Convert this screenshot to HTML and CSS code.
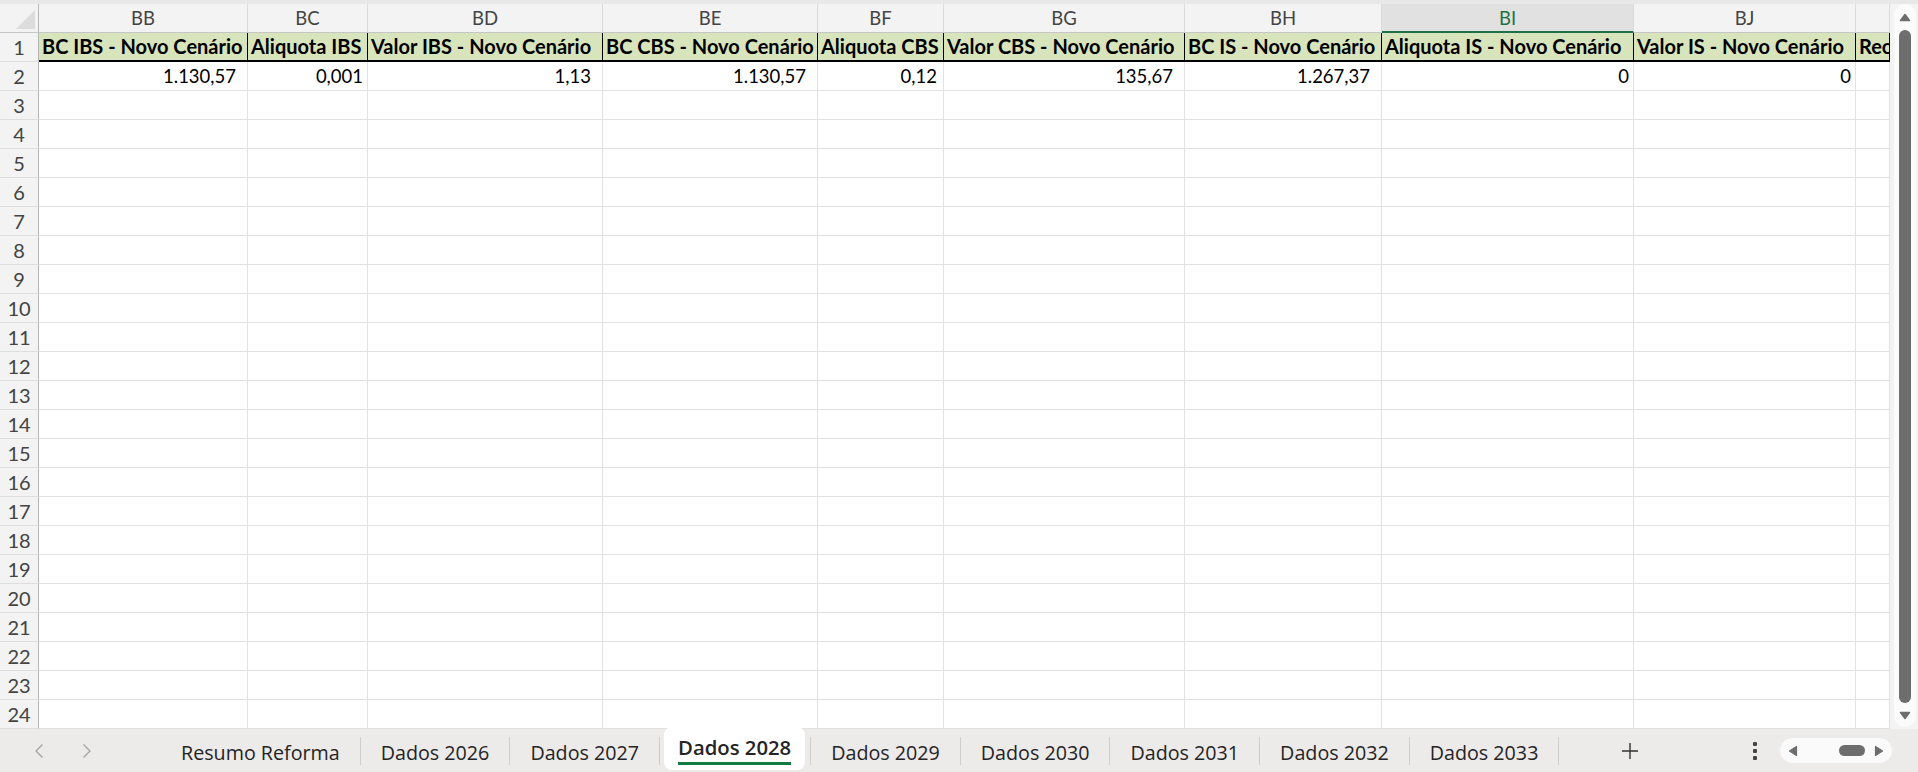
FILE: index.html
```html
<!DOCTYPE html>
<html lang="pt">
<head>
<meta charset="utf-8">
<title>Dados 2028</title>
<link rel="stylesheet" href="styles.css">
</head>
<body>
<div class="app">
  <div class="topstrip"></div>
  <div class="main">
    <div class="sheet">
      <div class="ch corner"><span class="tri"></span></div><div class="ch">BB</div><div class="ch">BC</div><div class="ch">BD</div><div class="ch">BE</div><div class="ch">BF</div><div class="ch">BG</div><div class="ch">BH</div><div class="ch sel">BI</div><div class="ch">BJ</div><div class="ch"></div>
      <div class="rh">1</div><div class="h">BC IBS - Novo Cenário</div><div class="h">Aliquota IBS</div><div class="h">Valor IBS - Novo Cenário</div><div class="h">BC CBS - Novo Cenário</div><div class="h">Aliquota CBS</div><div class="h">Valor CBS - Novo Cenário</div><div class="h">BC IS - Novo Cenário</div><div class="h">Aliquota IS - Novo Cenário</div><div class="h">Valor IS - Novo Cenário</div><div class="h">Receita</div>
      <div class="rh">2</div><div class="n acc">1.130,57</div><div class="n">0,001</div><div class="n acc">1,13</div><div class="n acc">1.130,57</div><div class="n mid">0,12</div><div class="n acc">135,67</div><div class="n acc">1.267,37</div><div class="n">0</div><div class="n">0</div><div></div>
      <div class="rh">3</div><div></div><div></div><div></div><div></div><div></div><div></div><div></div><div></div><div></div><div></div>
      <div class="rh">4</div><div></div><div></div><div></div><div></div><div></div><div></div><div></div><div></div><div></div><div></div>
      <div class="rh">5</div><div></div><div></div><div></div><div></div><div></div><div></div><div></div><div></div><div></div><div></div>
      <div class="rh">6</div><div></div><div></div><div></div><div></div><div></div><div></div><div></div><div></div><div></div><div></div>
      <div class="rh">7</div><div></div><div></div><div></div><div></div><div></div><div></div><div></div><div></div><div></div><div></div>
      <div class="rh">8</div><div></div><div></div><div></div><div></div><div></div><div></div><div></div><div></div><div></div><div></div>
      <div class="rh">9</div><div></div><div></div><div></div><div></div><div></div><div></div><div></div><div></div><div></div><div></div>
      <div class="rh">10</div><div></div><div></div><div></div><div></div><div></div><div></div><div></div><div></div><div></div><div></div>
      <div class="rh">11</div><div></div><div></div><div></div><div></div><div></div><div></div><div></div><div></div><div></div><div></div>
      <div class="rh">12</div><div></div><div></div><div></div><div></div><div></div><div></div><div></div><div></div><div></div><div></div>
      <div class="rh">13</div><div></div><div></div><div></div><div></div><div></div><div></div><div></div><div></div><div></div><div></div>
      <div class="rh">14</div><div></div><div></div><div></div><div></div><div></div><div></div><div></div><div></div><div></div><div></div>
      <div class="rh">15</div><div></div><div></div><div></div><div></div><div></div><div></div><div></div><div></div><div></div><div></div>
      <div class="rh">16</div><div></div><div></div><div></div><div></div><div></div><div></div><div></div><div></div><div></div><div></div>
      <div class="rh">17</div><div></div><div></div><div></div><div></div><div></div><div></div><div></div><div></div><div></div><div></div>
      <div class="rh">18</div><div></div><div></div><div></div><div></div><div></div><div></div><div></div><div></div><div></div><div></div>
      <div class="rh">19</div><div></div><div></div><div></div><div></div><div></div><div></div><div></div><div></div><div></div><div></div>
      <div class="rh">20</div><div></div><div></div><div></div><div></div><div></div><div></div><div></div><div></div><div></div><div></div>
      <div class="rh">21</div><div></div><div></div><div></div><div></div><div></div><div></div><div></div><div></div><div></div><div></div>
      <div class="rh">22</div><div></div><div></div><div></div><div></div><div></div><div></div><div></div><div></div><div></div><div></div>
      <div class="rh">23</div><div></div><div></div><div></div><div></div><div></div><div></div><div></div><div></div><div></div><div></div>
      <div class="rh">24</div><div></div><div></div><div></div><div></div><div></div><div></div><div></div><div></div><div></div><div></div>
    </div>
    <div class="vscroll">
      <div class="vtrack">
        <svg class="varrow" viewBox="0 0 12 9"><path d="M6 1.5 10.5 7.5H1.5Z"/></svg>
        <div class="vthumb"></div>
        <svg class="varrow" viewBox="0 0 12 9"><path d="M6 7.5 10.5 1.5H1.5Z"/></svg>
      </div>
    </div>
  </div>
  <div class="tabbar">
    <div class="nav">
      <svg class="chev" viewBox="0 0 8 14"><path d="M7 1 1 7l6 6"/></svg>
      <svg class="chev" viewBox="0 0 8 14"><path d="M1 1l6 6-6 6"/></svg>
    </div>
    <div class="tabs">
      <div class="tab">Resumo Reforma</div>
      <span class="sep"></span>
      <div class="tab">Dados 2026</div>
      <span class="sep"></span>
      <div class="tab">Dados 2027</div>
      <span class="sep"></span>
      <div class="tab active"><span class="lbl">Dados 2028</span></div>
      <span class="sep"></span>
      <div class="tab">Dados 2029</div>
      <span class="sep"></span>
      <div class="tab">Dados 2030</div>
      <span class="sep"></span>
      <div class="tab">Dados 2031</div>
      <span class="sep"></span>
      <div class="tab">Dados 2032</div>
      <span class="sep"></span>
      <div class="tab">Dados 2033</div>
      <span class="sep"></span>
    </div>
    <div class="add">
      <svg viewBox="0 0 18 18"><path d="M9 1v16M1 9h16"/></svg>
    </div>
    <div class="spacer"></div>
    <div class="more"><i></i><i></i><i></i></div>
    <div class="hscroll">
      <svg class="harrow" viewBox="0 0 10 12"><path d="M1.5 6 8.5 1.5v9Z"/></svg>
      <div class="hthumb"></div>
      <svg class="harrow" viewBox="0 0 10 12"><path d="M8.5 6 1.5 1.5v9Z"/></svg>
    </div>
  </div>
</div>
</body>
</html>
```

FILE: styles.css
```css
* { box-sizing: border-box; }
html, body { margin: 0; padding: 0; }
body {
  width: 1918px;
  height: 772px;
  overflow: hidden;
  background: #f3f3f3;
  font-family: Lato, "Liberation Sans", sans-serif;
}
.app { display: flex; flex-direction: column; height: 772px; }
.topstrip { flex: none; height: 4px; background: #e8e8e8; }
.main { flex: none; display: flex; height: 725px; }

/* spreadsheet grid */
.sheet {
  flex: none;
  width: 1890px;
  display: grid;
  grid-template-columns: 39px 209px 120px 235px 215px 126px 241px 197px 252px 222px 34px;
  grid-auto-rows: 29px;
  background: #fff;
  overflow: hidden;
}
.sheet > div {
  border-right: 1px solid #e1e1e1;
  border-bottom: 1px solid #e1e1e1;
  white-space: nowrap;
  overflow: hidden;
  font-size: 18.5px;
  line-height: 28px;
  padding: 0 4px;
  color: #000;
}
.sheet > .ch {
  background: #f3f3f3;
  color: #444;
  text-align: center;
  border-right-color: #dadada;
  border-bottom-color: #c6c6c6;
}
.sheet > .ch.sel {
  background: #e1e1e1;
  color: #1e7145;
  border-bottom: 2px solid #1e7145;
}
.sheet > .corner {
  display: flex;
  align-items: flex-end;
  justify-content: flex-end;
  padding: 0 3px 3px 0;
  border-right-color: #b5b5b5;
}
.tri {
  width: 19px;
  height: 19px;
  background: #dcdcdc;
  clip-path: polygon(100% 0, 100% 100%, 0 100%);
}
.sheet > .rh {
  background: #f3f3f3;
  color: #444;
  text-align: center;
  padding: 0;
  font-size: 20px;
  border-right: 1px solid #b5b5b5;
  border-bottom-color: #dedede;
}
.sheet > .h {
  background: #d8e4bc;
  font-weight: 700;
  font-size: 20px;
  line-height: 27px;
  padding: 0 3px;
  border-right-color: #000;
  border-bottom: 2px solid #000;
}
.sheet > .n { text-align: right; padding-right: 4px; }
.sheet > .n.acc { padding-right: 11px; }
.sheet > .n.mid { padding-right: 6px; }

/* vertical scrollbar */
.vscroll {
  flex: none;
  width: 28px;
  display: flex;
  padding: 0 2px 2px 4px;
  background: #f3f3f3;
}
.vtrack {
  flex: 1;
  display: flex;
  flex-direction: column;
  align-items: center;
  padding: 9px 0 7px;
  background: #fbfbfb;
  border-radius: 12px;
}
.varrow { width: 12px; height: 9px; flex: none; }
.varrow path { fill: #6e6e6e; stroke: #6e6e6e; stroke-width: 1.5; stroke-linejoin: round; }
.vthumb {
  flex: 1;
  width: 12px;
  margin: 8px 0;
  background: #6e6e6e;
  border-radius: 6px;
}

/* sheet tabs */
.tabbar {
  flex: none;
  height: 43px;
  display: flex;
  background: #edeaea;
  font-family: "Open Sans", "Noto Sans", sans-serif;
  font-size: 19.7px;
  color: #242424;
}
.nav {
  flex: none;
  width: 161px;
  display: flex;
  align-items: center;
  gap: 40px;
  padding-left: 35px;
}
.chev { width: 8px; height: 14px; }
.chev path { fill: none; stroke: #a2a2a2; stroke-width: 1.3; stroke-linecap: round; stroke-linejoin: round; }
.tabs { flex: none; display: flex; align-items: flex-start; height: 43px; }
.tab {
  height: 43px;
  display: flex;
  align-items: center;
  padding: 3px 20px 0;
  white-space: nowrap;
}
.sep { flex: none; width: 1px; height: 28px; margin-top: 8px; background: #d0cdcd; }
.tab.active {
  margin: -2px 5px 0 4px;
  height: 43px;
  align-items: flex-start;
  padding: 8px 14px 0;
  background: #fff;
  border-radius: 8px;
  font-weight: 600;
  font-size: 20.3px;
}
.lbl {
  display: block;
  line-height: 24px;
  padding-bottom: 3px;
  border-bottom: 3px solid #107c41;
}
.add {
  flex: none;
  width: 142px;
  display: flex;
  align-items: center;
  justify-content: center;
}
.add svg { width: 18px; height: 18px; }
.add path { stroke: #333; stroke-width: 1.4; }
.spacer { flex: 1; }
.more {
  flex: none;
  width: 10px;
  margin-right: 20px;
  display: flex;
  flex-direction: column;
  align-items: center;
  justify-content: center;
  gap: 3px;
}
.more i { display: block; width: 4px; height: 4px; background: #444; border-radius: 1px; }
.hscroll {
  flex: none;
  width: 112px;
  height: 25px;
  margin: 9px 26px 0 0;
  display: flex;
  align-items: center;
  padding: 0 8px;
  background: #fafafa;
  border-radius: 13px;
}
.harrow { width: 10px; height: 12px; flex: none; }
.harrow path { fill: #6e6e6e; stroke: #6e6e6e; stroke-width: 1.2; stroke-linejoin: round; }
.hthumb {
  width: 26px;
  height: 11px;
  margin: 0 9px 0 41px;
  background: #6e6e6e;
  border-radius: 6px;
}
```
